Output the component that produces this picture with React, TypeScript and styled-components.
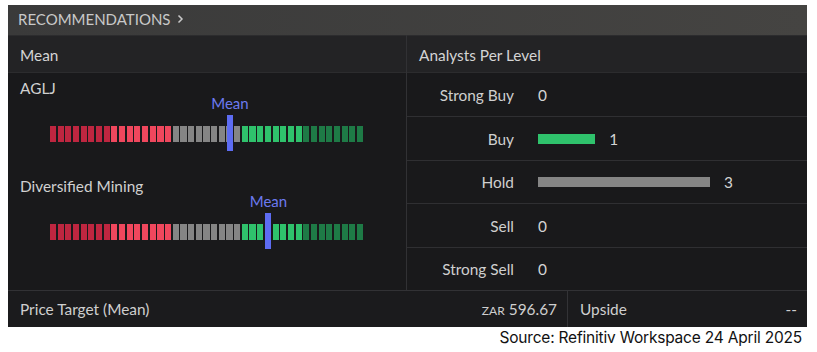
import React from 'react'
import styled, { createGlobalStyle } from 'styled-components'

const GlobalStyle = createGlobalStyle`
  body {
    margin: 0;
    background: #ffffff;
    font-family: Lato, 'Open Sans', sans-serif;
  }
`

const Page = styled.div`
  width: 817px;
  height: 352px;
  padding: 5px 10px 0 8px;
  box-sizing: border-box;
`

const Panel = styled.div`
  width: 799px;
  background: #19191b;
  color: #cfcfcf;
  font-size: 15.4px;
`

const TitleBar = styled.div`
  height: 30px;
  display: flex;
  align-items: center;
  gap: 7px;
  padding: 0 0 2px 10px;
  box-sizing: border-box;
  background: linear-gradient(90deg, #3a3a3a 0%, #454442 100%);
  color: #c9c9c9;
  font-size: 15px;
`

const Columns = styled.div`
  display: grid;
  grid-template-columns: 398px 1fr;
`

const Column = styled.div<{ $divider?: boolean }>`
  display: flex;
  flex-direction: column;
  border-left: ${({ $divider }) => ($divider ? '1px solid #313134' : 'none')};
`

const ColHead = styled.div`
  height: 38px;
  display: flex;
  align-items: center;
  padding: 2px 0 0 12px;
  background: #232325;
  border-top: 1px solid #2c2c2e;
  border-bottom: 1px solid #2c2c2e;
  box-sizing: border-box;
  color: #d4d4d4;
`

const GaugeList = styled.div`
  padding: 7px 0 0 12px;
  height: 216px;
  box-sizing: border-box;
`

const GaugeBlock = styled.div`
  margin-bottom: 27px;
`

const GaugeLabel = styled.div`
  line-height: 16px;
  color: #d0d0d0;
  margin-bottom: 19px;
`

const Track = styled.div`
  position: relative;
  margin-left: 30px;
  width: 313px;
  height: 36px;
`

const Segments = styled.div`
  position: absolute;
  top: 11px;
  left: 0;
  right: 0;
  height: 16px;
  display: grid;
  grid-template-columns: repeat(41, 1fr);
  column-gap: 1.6px;
`

const Segment = styled.div<{ $color: string }>`
  background: ${({ $color }) => $color};
`

const Marker = styled.div`
  position: absolute;
  top: 0;
  width: 6px;
  height: 36px;
  margin-left: -3px;
  background: #5d6cf2;
`

const MarkerText = styled.div`
  position: absolute;
  top: -20px;
  transform: translateX(-50%);
  color: #6c7af0;
  font-size: 15px;
  line-height: 16px;
  white-space: nowrap;
`

const LevelRow = styled.div`
  height: 43.4px;
  display: grid;
  grid-template-columns: 107px 1fr;
  column-gap: 24px;
  align-items: center;
  padding-top: 1px;
  box-sizing: border-box;
  & + & {
    border-top: 1px solid #2f2f32;
  }
`

const LevelLabel = styled.div`
  text-align: right;
  color: #cfcfcf;
`

const LevelValue = styled.div`
  display: flex;
  align-items: center;
  gap: 14px;
  color: #d4d4d4;
`

const LevelBar = styled.div<{ $color: string }>`
  height: 10px;
  background: ${({ $color }) => $color};
`

const Footer = styled.div`
  height: 37px;
  display: grid;
  grid-template-columns: 559px 1fr;
  border-top: 1px solid #323235;
  background: #1b1b1d;
  box-sizing: border-box;
`

const FooterCell = styled.div<{ $divider?: boolean }>`
  display: flex;
  align-items: center;
  justify-content: space-between;
  padding: 1px 10px 0 12px;
  border-left: ${({ $divider }) => ($divider ? '1px solid #333336' : 'none')};
`

const Price = styled.span`
  color: #cfcfcf;
`

const Currency = styled.span`
  font-size: 12px;
  margin-right: 4px;
`

const Source = styled.div`
  text-align: right;
  width: 794px;
  margin-top: 1px;
  font-family: Inter, sans-serif;
  font-size: 15.5px;
  color: #111111;
  letter-spacing: -0.2px;
`

const segmentColor = (i: number): string => {
  if (i < 8) return '#be2640'
  if (i < 16) return '#f0475d'
  if (i < 25) return '#858585'
  if (i < 33) return '#2fc26c'
  return '#1e7a46'
}

const Gauge: React.FC<{ label: string; mean: number }> = ({ label, mean }) => (
  <GaugeBlock>
    <GaugeLabel>{label}</GaugeLabel>
    <Track>
      <Segments>
        {Array.from({ length: 41 }, (_, i) => (
          <Segment key={i} $color={segmentColor(i)} />
        ))}
      </Segments>
      <MarkerText style={{ left: `${mean}%` }}>Mean</MarkerText>
      <Marker style={{ left: `${mean}%` }} />
    </Track>
  </GaugeBlock>
)

const levels = [
  { label: 'Strong Buy', count: 0, color: '' },
  { label: 'Buy', count: 1, color: '#2fc26c' },
  { label: 'Hold', count: 3, color: '#858585' },
  { label: 'Sell', count: 0, color: '' },
  { label: 'Strong Sell', count: 0, color: '' },
]

const Chevron = () => (
  <svg width="7" height="10" viewBox="0 0 7 10">
    <polyline points="1.5,1.5 5,5 1.5,8.5" fill="none" stroke="#c9c9c9" strokeWidth="1.5" />
  </svg>
)

export default function App() {
  return (
    <Page>
      <GlobalStyle />
      <Panel>
        <TitleBar>
          RECOMMENDATIONS
          <Chevron />
        </TitleBar>
        <Columns>
          <Column>
            <ColHead>Mean</ColHead>
            <GaugeList>
              <Gauge label="AGLJ" mean={57.5} />
              <Gauge label="Diversified Mining" mean={69.8} />
            </GaugeList>
          </Column>
          <Column $divider>
            <ColHead>Analysts Per Level</ColHead>
            {levels.map((l) => (
              <LevelRow key={l.label}>
                <LevelLabel>{l.label}</LevelLabel>
                <LevelValue>
                  {l.count > 0 && <LevelBar $color={l.color} style={{ width: l.count * 57.3 }} />}
                  {l.count}
                </LevelValue>
              </LevelRow>
            ))}
          </Column>
        </Columns>
        <Footer>
          <FooterCell>
            <span>Price Target (Mean)</span>
            <Price>
              <Currency>ZAR</Currency>596.67
            </Price>
          </FooterCell>
          <FooterCell $divider>
            <span>Upside</span>
            <span>--</span>
          </FooterCell>
        </Footer>
      </Panel>
      <Source>Source: Refinitiv Workspace 24 April 2025</Source>
    </Page>
  )
}
